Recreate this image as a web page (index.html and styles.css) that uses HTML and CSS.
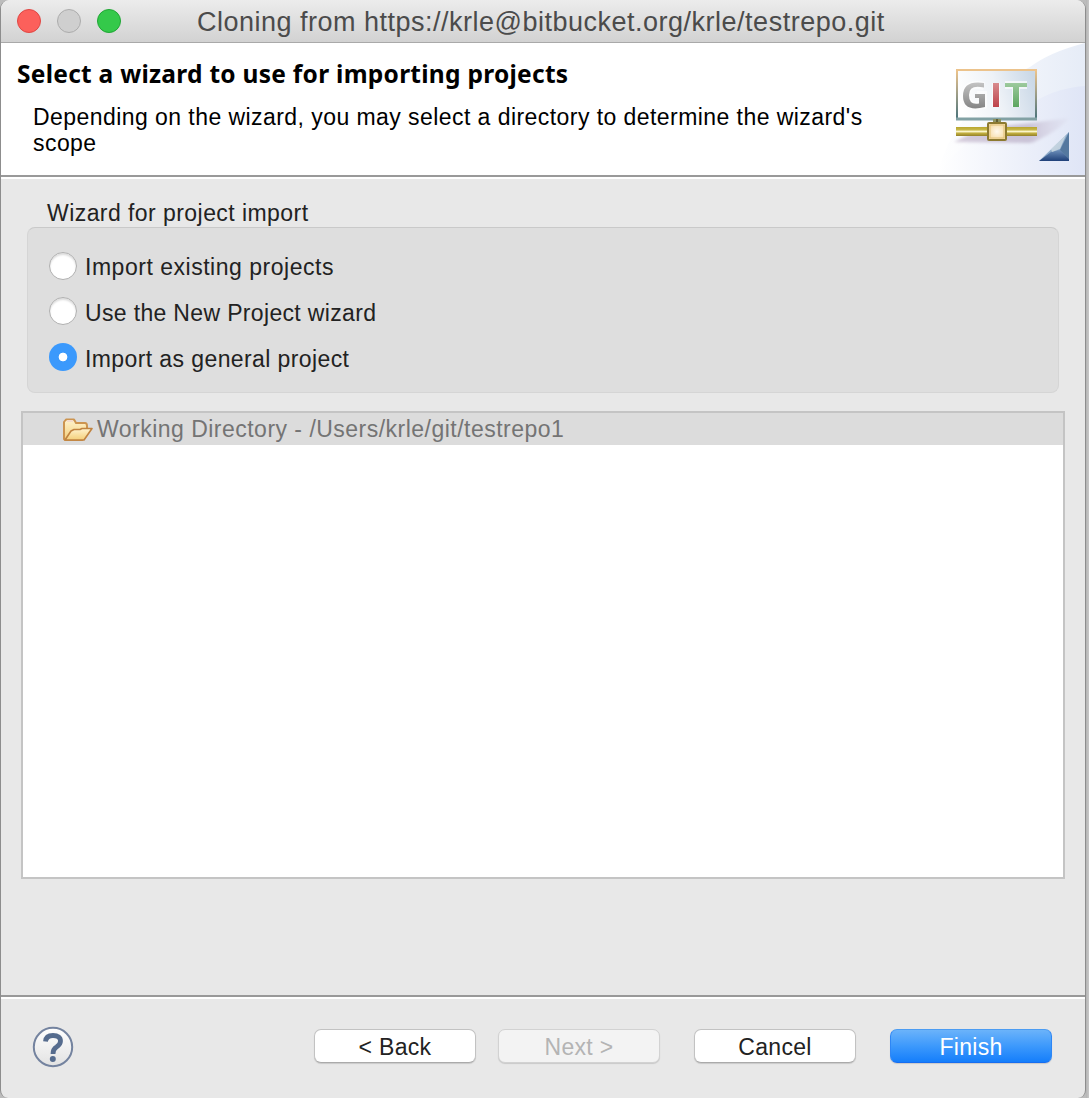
FILE: index.html
```html
<!DOCTYPE html>
<html lang="en">
<head>
<meta charset="utf-8">
<title>Cloning from https://krle@bitbucket.org/krle/testrepo.git</title>
<link rel="stylesheet" href="styles.css">
</head>
<body>
<div class="window">
  <header class="titlebar">
    <div class="lights"><i class="light close"></i><i class="light minimize"></i><i class="light expand"></i></div>
    <span class="title">Cloning from https://krle@bitbucket.org/krle/testrepo.git</span>
  </header>
  <section class="banner">
    <div class="banner-text">
      <h1><span>Select a wizard to use for importing projects</span></h1>
      <p><span class="line-one">Depending on the wizard, you may select a directory to determine the wizard's</span><br><span>scope</span></p>
    </div>
    <svg class="git-art" width="156" height="132" viewBox="929 43 156 132">
      <defs>
        <linearGradient id="sky" x1="0" x2="1"><stop offset="0" stop-color="#fff"/><stop offset="1" stop-color="#dfe5f6"/></linearGradient>
        <linearGradient id="sky2" x1="0" x2="1"><stop offset="0" stop-color="#fff"/><stop offset="1" stop-color="#e6ecf7"/></linearGradient>
        <linearGradient id="screen" x1="0" y1=".5" x2="1" y2=".3"><stop offset="0" stop-color="#fff"/><stop offset=".5" stop-color="#eef2f7"/><stop offset="1" stop-color="#cad8e7"/></linearGradient>
        <linearGradient id="frame" x1="0" y1="0" x2="0" y2="1"><stop offset="0" stop-color="#efc58b"/><stop offset=".35" stop-color="#b5a98a"/><stop offset="1" stop-color="#49727a"/></linearGradient>
        <linearGradient id="gray" x1="0" y1="0" x2="0" y2="1"><stop offset="0" stop-color="#c3c3c3"/><stop offset="1" stop-color="#858585"/></linearGradient>
        <linearGradient id="red" x1="0" y1="0" x2="0" y2="1"><stop offset="0" stop-color="#d88b8e"/><stop offset="1" stop-color="#bd4249"/></linearGradient>
        <linearGradient id="green" x1="0" y1="0" x2="0" y2="1"><stop offset="0" stop-color="#9dca9d"/><stop offset="1" stop-color="#5ca660"/></linearGradient>
        <linearGradient id="pipe" x1="0" y1="0" x2="0" y2="1"><stop offset="0" stop-color="#b8a52e"/><stop offset=".3" stop-color="#c6b748"/><stop offset=".5" stop-color="#fbf5c9"/><stop offset=".7" stop-color="#c0ad3d"/><stop offset="1" stop-color="#94812b"/></linearGradient>
        <radialGradient id="node"><stop offset="0" stop-color="#fff9ed"/><stop offset="1" stop-color="#f7dda7"/></radialGradient>
        <linearGradient id="shade" x1="0" x2="1"><stop offset="0" stop-color="#cbbfd2" stop-opacity=".8"/><stop offset=".65" stop-color="#c1b8ce" stop-opacity=".8"/><stop offset="1" stop-color="#d2cde0" stop-opacity=".15"/></linearGradient>
        <linearGradient id="tri" x1="0" y1="0" x2="1" y2="1"><stop offset="0" stop-color="#c6d6e5"/><stop offset=".55" stop-color="#8ba9c8"/><stop offset="1" stop-color="#49689b"/></linearGradient>
        <linearGradient id="base" x1="0" y1="0" x2="0" y2="1"><stop offset="0" stop-color="#6d8fba"/><stop offset="1" stop-color="#1f4079"/></linearGradient>
        <filter id="soft" x="-20%" y="-30%" width="140%" height="160%"><feGaussianBlur stdDeviation="1.6"/></filter>
      </defs>
      <path d="M1085 43Q1050 52 1030 67Q955 104 937 175H1085Z" fill="url(#sky2)"/>
      <path d="M1085 86Q1052 88 1025 108Q970 130 937 175H1085Z" fill="url(#sky)"/>
      <path d="M954 142L982 128L1031 123L1069 118Q1060 130 1036 141Q1033 143 1026 143Z" fill="url(#shade)" filter="url(#soft)"/>
      <path d="M957 70H1036V119H957Z" fill="url(#screen)" stroke="url(#frame)" stroke-width="2"/>
      <path d="M956 70H1037" stroke="#ecc38c" stroke-width="2"/>
      <path d="M956 119H1037" stroke="#82a1a4" stroke-width="3"/>
      <g fill="none" stroke="#fff" stroke-width="8" opacity=".65"><path d="M984 86Q966 82 966 95Q966 109 983 105V95H977"/><path d="M996 83V107M1005 85H1027M1016 83V107"/></g>
      <path d="M984 83V87.500Q969 84 969 95Q969 105.500 979 103.500V98H975V94H985V107Q963 112.500 963 96Q963 80 984 83Z" fill="url(#gray)"/>
      <path d="M993 83H999V107H993Z" fill="url(#red)"/>
      <path d="M1005 83H1027V87H1019V107H1013V87H1005Z" fill="url(#green)"/>
      <path d="M993 119H1001V124H993Z" fill="#8e9461"/><path d="M997 119V124" stroke="#625f34" stroke-width="2"/>
      <rect x="956" y="127" width="81" height="9" fill="url(#pipe)"/>
      <rect x="988" y="123" width="18" height="17" rx="1" fill="url(#node)" stroke="#8d7a30" stroke-width="2"/>
      <rect x="990" y="125" width="14" height="13" fill="none" stroke="#e1c178" stroke-width="1"/>
      <path d="M1039 161L1069 132V161Z" fill="url(#tri)"/>
      <path d="M1039 161L1051 152L1060 150L1069 159V161Z" fill="url(#base)"/>
      <path d="M1069 132L1060 150L1069 159Z" fill="#54789f"/>
      <path d="M1051 149L1066 135L1060 149L1052 152Z" fill="#d3dfe6" opacity=".75"/>
    </svg>
  </section>
  <main class="content">
    <div class="group-label"><span>Wizard for project import</span></div>
    <div class="group">
      <label class="option"><i class="radio"></i><span class="opt-a">Import existing projects</span></label>
      <label class="option"><i class="radio"></i><span class="opt-b">Use the New Project wizard</span></label>
      <label class="option"><i class="radio checked"></i><span class="opt-c">Import as general project</span></label>
    </div>
    <div class="tree">
      <div class="tree-row">
        <svg width="32" height="24" viewBox="0 0 32 24">
          <defs><linearGradient id="folder" x1="0" y1="0" x2="0" y2="1"><stop offset="0" stop-color="#fff3ce"/><stop offset="1" stop-color="#f4cf79"/></linearGradient></defs>
          <path d="M2 21V4L4 1.500H12L14 5H23Q25 5 25 8V12L20 22H3Z" fill="url(#folder)" stroke="#cc9450" stroke-width="2" stroke-linejoin="round"/>
          <path d="M3 22L9 13L12 11.500H18L20 10.500H30L22 22Z" fill="url(#folder)" stroke="#c08340" stroke-width="1.600" stroke-linejoin="round"/>
          <path d="M5 3H11" stroke="#f5dccb" stroke-width="2"/>
        </svg>
        <span>Working Directory - /Users/krle/git/testrepo1</span>
      </div>
    </div>
  </main>
  <footer class="footer">
    <svg class="help" width="42" height="42" viewBox="0 0 42 42">
      <defs><linearGradient id="helpbg" x1="0" y1="0" x2="0" y2="1"><stop offset="0" stop-color="#fff"/><stop offset="1" stop-color="#e2e2e2"/></linearGradient></defs>
      <circle cx="21" cy="21" r="19.200" fill="url(#helpbg)" stroke="#74839f" stroke-width="2"/>
      <path d="M13.500 15.500Q14 9.500 21 9.500Q28.500 9.500 28.500 15Q28.500 18.500 24.500 21Q21 23 21 28" fill="none" stroke="#566c8e" stroke-width="4.800"/>
      <circle cx="20.800" cy="33" r="3" fill="#566c8e"/>
    </svg>
    <div class="buttons">
      <button><span>&lt; Back</span></button>
      <button class="next" disabled><span>Next &gt;</span></button>
      <button class="cancel"><span>Cancel</span></button>
      <button class="finish"><span>Finish</span></button>
    </div>
  </footer>
</div>
</body>
</html>
```
FILE: styles.css
```css
* { box-sizing: border-box; }
body {
  margin: 0;
  height: 1098px;
  overflow: hidden;
  background: linear-gradient(90deg, #bcbcbc 0 1086px, #b5b5b5 1086px, #c8c8c8 1089px);
  font: 23px/26px "Liberation Sans", Arial, sans-serif;
  letter-spacing: 0.44px;
  color: #222;
}
.window {
  display: flex;
  flex-direction: column;
  width: 1086px;
  height: 1098px;
  border: solid #8d8d8d;
  border-width: 0 1px;
  border-radius: 9px 9px 8px 8px;
  overflow: hidden;
  background: #e8e8e8;
}
.titlebar {
  display: flex;
  flex: none;
  height: 43px;
  padding-left: 16px;
  background: linear-gradient(#ececec, #d2d2d2);
  border-bottom: 1px solid #a9a9a9;
  align-items: center;
}
.lights { display: flex; gap: 16px; width: 180px; }
.light { width: 24px; height: 24px; border-radius: 50%; border: 1px solid; }
.close { background: #fc605b; border-color: #df4744; }
.minimize { background: #cfcfcf; border-color: #acacac; }
.expand { background: #34c94a; border-color: #20a635; }
.title { padding-top: 2px; font-size: 27px; line-height: 40px; letter-spacing: 0.5px; color: #4b4b4b; white-space: nowrap; }
.banner {
  display: flex;
  justify-content: space-between;
  flex: none;
  height: 136px;
  background: #fff;
  border-bottom: 2px solid #fff;
  box-shadow: inset 0 -2px #999;
  color: #000;
}
.banner-text { padding: 15px 0 0 16px; white-space: nowrap; }
.git-art { flex: none; }
h1 { margin: 0; font: bold 24.5px/32px "Noto Sans", sans-serif; letter-spacing: 0.27px; }
p { margin: 14px 0 0 16px; }
.content { flex: 1; padding: 21px 20px 0; white-space: nowrap; }
.group-label { height: 27px; padding-left: 26px; }
.group {
  height: 166px;
  margin: 0 6px;
  padding: 17px 0 0 21px;
  border: 1px solid #d5d5d5;
  border-top-color: #c9c9c9;
  border-radius: 8px;
  background: #dedede;
}
.option { display: flex; align-items: center; height: 46px; gap: 8px; }
.option span { padding-bottom: 2px; }
.opt-a { letter-spacing: 0.52px; }
.opt-b { letter-spacing: 0.34px; }
.opt-c { letter-spacing: 0.4px; }
.radio {
  width: 28px;
  height: 28px;
  margin-top: -4px;
  border: 1px solid #b0b0b0;
  border-radius: 50%;
  background: #fff;
  box-shadow: inset 0 2px 2px #ddd;
}
.option + .option .radio { margin-top: -6px; }
.checked { border: 0; background: radial-gradient(circle, #fff 0 4px, #3b99fc 4.7px); box-shadow: none; }
.tree { height: 468px; margin-top: 18px; border: 2px solid #c4c4c4; background: #fff; }
.tree-row { display: flex; align-items: center; height: 32px; padding: 2px 0 0 39px; gap: 3px; background: #dcdcdc; color: #747474; letter-spacing: 0.48px; }
.tree-row span { padding-bottom: 2px; }
.footer {
  display: flex;
  flex: none;
  height: 103px;
  padding: 29px 33px 0 31px;
  border-top: 2px solid #999;
  box-shadow: inset 0 2px #fff;
}
.buttons { display: flex; gap: 22px; margin-left: auto; padding-top: 3px; }
button {
  width: 162px;
  height: 34px;
  padding: 1px 0 0;
  border: 1px solid #c2c2c2;
  border-bottom-color: #aaa;
  border-radius: 7px;
  background: #fff;
  box-shadow: 0 1px 1px #0002;
  color: #222;
  font: inherit;
  letter-spacing: 0.3px;
}
.next { background: #f3f3f3; border-color: #d2d2d2; color: #b4b4b4; }
.cancel, .finish { margin-left: 12px; }
.finish { border-color: #4c9cf2 #2e86f5 #176df0; background: linear-gradient(#6bb3fa, #3d99fc 50%, #157efb); color: #fff; }
```
